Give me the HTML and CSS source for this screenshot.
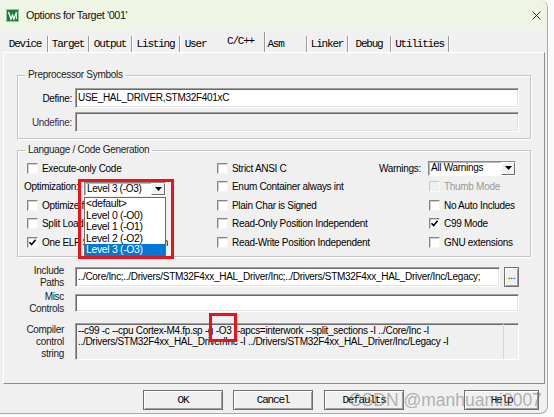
FILE: index.html
```html
<!DOCTYPE html>
<html>
<head>
<meta charset="utf-8">
<link rel="stylesheet" href="styles.css">
</head>
<body>
<div class="window">
  <div class="titlebar">
    <svg class="app-icon" width="13" height="13" viewBox="0 0 13 13">
      <rect x="0.5" y="0.5" width="12" height="12" fill="#1e7b3c" stroke="#8cc79a"/>
      <path d="M2.5 3 L5 10 L6.5 6 L8 10 L10.5 3" fill="none" stroke="#fff" stroke-width="1.3"/>
      <path d="M10.5 3 V10" stroke="#d8f0d8" stroke-width="1"/>
    </svg>
    <span class="title">Options for Target '001'</span>
    <svg class="close" width="9" height="9" viewBox="0 0 9 9">
      <path d="M0.5 0.5 L8.5 8.5 M8.5 0.5 L0.5 8.5" stroke="#2b2b2b" stroke-width="1"/>
    </svg>
  </div>

  <div class="tabs">
    <div class="tab">Device</div>
    <div class="tab">Target</div>
    <div class="tab">Output</div>
    <div class="tab">Listing</div>
    <div class="tab tab-user">User</div>
    <div class="tab tab-active">C/C++</div>
    <div class="tab tab-asm">Asm</div>
    <div class="tab">Linker</div>
    <div class="tab">Debug</div>
    <div class="tab">Utilities</div>
  </div>

  <div class="panel">
    <fieldset class="group group-pre">
      <legend>Preprocessor Symbols</legend>
      <div class="sym-grid">
        <span class="lbl">Define:</span>
        <div class="input">USE_HAL_DRIVER,STM32F401xC</div>
        <span class="lbl lbl-undef">Undefine:</span>
        <div class="input input-disabled"></div>
      </div>
    </fieldset>

    <fieldset class="group group-lang">
      <legend>Language / Code Generation</legend>
      <div class="lang-grid">
        <div class="cell"><span class="cb"></span>Execute-only Code</div>
        <div class="cell"><span class="cb"></span>Strict ANSI C</div>
        <div class="cell">
          <span class="warn-label">Warnings:</span>
          <div class="select select-warn">
            <span class="select-value">All Warnings</span>
            <span class="select-btn"><svg width="7" height="4" viewBox="0 0 7 4"><path d="M0 0 H7 L3.5 4 Z" fill="#000"/></svg></span>
          </div>
        </div>

        <div class="cell">
          <span class="opt-label">Optimization:</span>
          <div class="select select-opt">
            <span class="select-value">Level 3 (-O3)</span>
            <span class="select-btn"><svg width="7" height="4" viewBox="0 0 7 4"><path d="M0 0 H7 L3.5 4 Z" fill="#000"/></svg></span>
            <div class="dropdown">
              <div class="dd-item">&lt;default&gt;</div>
              <div class="dd-item">Level 0 (-O0)</div>
              <div class="dd-item">Level 1 (-O1)</div>
              <div class="dd-item">Level 2 (-O2)</div>
              <div class="dd-item dd-sel">Level 3 (-O3)</div>
            </div>
            <div class="redbox redbox-opt"></div>
          </div>
        </div>
        <div class="cell"><span class="cb"></span>Enum Container always int</div>
        <div class="cell cell-right cell-disabled"><span class="cb cb-disabled"></span>Thumb Mode</div>

        <div class="cell"><span class="cb"></span>Optimize for Time</div>
        <div class="cell"><span class="cb"></span>Plain Char is Signed</div>
        <div class="cell cell-right"><span class="cb"></span>No Auto Includes</div>

        <div class="cell"><span class="cb"></span>Split Load and Store Multiple</div>
        <div class="cell"><span class="cb"></span>Read-Only Position Independent</div>
        <div class="cell cell-right"><span class="cb"><svg width="9" height="9" viewBox="0 0 9 9"><path d="M1.5 4.2 L3.6 6.5 L7.6 1.8" fill="none" stroke="#000" stroke-width="1.6"/></svg></span>C99 Mode</div>

        <div class="cell"><span class="cb"><svg width="9" height="9" viewBox="0 0 9 9"><path d="M1.5 4.2 L3.6 6.5 L7.6 1.8" fill="none" stroke="#000" stroke-width="1.6"/></svg></span>One ELF Section per Function</div>
        <div class="cell"><span class="cb"></span>Read-Write Position Independent</div>
        <div class="cell cell-right"><span class="cb"></span>GNU extensions</div>
      </div>
    </fieldset>

    <div class="paths">
      <span class="plbl">Include<br>Paths</span>
      <div class="field-row">
        <div class="input input-inc">../Core/Inc;../Drivers/STM32F4xx_HAL_Driver/Inc;../Drivers/STM32F4xx_HAL_Driver/Inc/Legacy;</div>
        <div class="dots-btn">...</div>
      </div>
      <span class="plbl">Misc<br>Controls</span>
      <div class="input input-misc"></div>
      <span class="plbl plbl-top">Compiler<br>control<br>string</span>
      <div class="ctrl-string">
        <div class="ctrl-text">--c99 -c --cpu Cortex-M4.fp.sp -g <span class="o3">-O3<span class="redbox redbox-o3"></span></span> --apcs=interwork --split_sections -I ../Core/Inc -I<br>../Drivers/STM32F4xx_HAL_Driver/Inc -I ../Drivers/STM32F4xx_HAL_Driver/Inc/Legacy -I</div>
        <div class="vscroll"></div>
      </div>
    </div>
  </div>

  <div class="buttons">
    <div class="btn">OK</div>
    <div class="btn">Cancel</div>
    <div class="btn btn-defaults">Defaults</div>
    <div class="btn btn-help">Help</div>
  </div>

  <div class="watermark">CSDN @manhuami2007</div>
</div>
</body>
</html>
```

FILE: styles.css
```css
* { box-sizing: border-box; }

body {
  margin: 0;
  background: #fafafa;
  font-family: "Liberation Sans", Arial, sans-serif;
  font-size: 10px;
  letter-spacing: -0.3px;
  color: #000;
}

.window {
  position: relative;
  width: 548px;
  height: 414px;
  background: #f0f0f0;
  border-right: 1px solid #a9a9a9;
  border-bottom: 1px solid #a9a9a9;
  border-radius: 0 8px 8px 0;
  overflow: hidden;
}

/* title bar */
.titlebar {
  height: 30px;
  background: #eef5e4;
  display: flex;
  align-items: center;
  padding-left: 6px;
}
.app-icon { margin-right: 7px; }
.title {
  font-size: 10.8px;
  letter-spacing: -0.4px;
  color: #111;
}
.close {
  margin-left: auto;
  margin-right: 6px;
}

/* tabs */
.tabs {
  display: grid;
  grid-template-columns: 45px 41px 43px 48px 37px 48px 42px 41px 43px 58px;
  align-items: end;
  height: 22px;
  margin-left: 3px;
  font-family: "Liberation Mono", "Courier New", monospace;
  font-size: 11px;
  letter-spacing: -1.2px;
}
.tab {
  height: 16px;
  line-height: 16px;
  text-align: center;
  border-right: 1px solid #9a9a9a;
  box-shadow: 1px 0 0 #fff;
  white-space: nowrap;
}
.tab-user { border-right: none; box-shadow: none; padding-right: 6px; }
.tab-asm { padding-right: 20px; }
.tab-active {
  height: 20px;
  line-height: 19px;
}

/* panel */
.panel {
  margin-left: 3px;
  width: 542px;
  height: 332px;
  border-top: 1px solid #fff;
  border-left: 1px solid #fff;
  border-right: 1px solid #8e8e8e;
  border-bottom: 1px solid #8e8e8e;
  padding: 15px 13px 0 13px;
  display: flex;
  flex-direction: column;
}

.group {
  margin: 0;
  min-width: 0;
  border: 1px solid #c4c4c4;
  box-shadow: inset 1px 1px 0 #fff, 1px 1px 0 #fff;
}
.group legend {
  margin-left: -2px;
  padding: 0 3px;
  line-height: 14px;
  color: #1a1a1a;
}
.group-pre { padding: 6px 11px 6px 9px; }
.group-lang { margin-top: 4px; padding: 2px 11px 4px 9px; }

.sym-grid {
  display: grid;
  grid-template-columns: 45px 1fr;
  column-gap: 3px;
  row-gap: 4px;
  align-items: center;
}
.lbl { text-align: right; white-space: nowrap; }
.lbl-undef { color: #4a2650; }

.input {
  height: 20px;
  background: #fff;
  border-top: 1px solid #a0a0a0;
  border-left: 1px solid #a0a0a0;
  border-right: 1px solid #fff;
  border-bottom: 1px solid #fff;
  box-shadow: inset 1px 1px 0 #6a6a6a, inset -1px -1px 0 #e3e3e3;
  padding: 0 2px;
  line-height: 18px;
  white-space: nowrap;
  overflow: hidden;
}
.input-disabled { background: #f0f0f0; }

/* language grid */
.lang-grid {
  display: grid;
  grid-template-columns: 190px 162px 1fr;
  grid-auto-rows: 18.5px;
}
.cell {
  display: flex;
  align-items: center;
  gap: 4px;
  white-space: nowrap;
}
.cell-right { padding-left: 50px; }
.cell-disabled { color: #9a9a9a; }

.cb {
  width: 11px;
  height: 11px;
  flex: none;
  background: #fff;
  border: 1px solid;
  border-color: #868686 #f4f4f4 #f4f4f4 #868686;
  box-shadow: inset 1px 1px 0 #cfcfcf;
  display: flex;
  align-items: center;
  justify-content: center;
}
.cb-disabled {
  background: #f0f0f0;
  border-color: #c8c8c8 #fafafa #fafafa #c8c8c8;
  box-shadow: none;
}

.opt-label {
  width: 56px;
  margin-left: -3px;
  flex: none;
}
.warn-label { width: 45px; flex: none; }

.select {
  position: relative;
  display: flex;
  background: #fff;
  border: 1px solid;
  border-color: #8a8a8a #fff #fff #8a8a8a;
  box-shadow: inset 1px 1px 0 #b8b8b8;
  flex: none;
}
.select-opt { width: 82px; height: 14px; align-self: flex-end; }
.select-warn { width: 88px; height: 15px; }
.select-value {
  flex: 1;
  padding-left: 2px;
  line-height: 12px;
}
.select-btn {
  width: 14px;
  background: #f2f2f2;
  border: 1px solid;
  border-color: #fff #6d6d6d #6d6d6d #fff;
  display: flex;
  align-items: center;
  justify-content: center;
}

.dropdown {
  position: absolute;
  z-index: 2;
  left: -1px;
  top: 14px;
  width: 82px;
  background: #fff;
  border: 1px solid #6b6b6b;
}
.dd-item {
  height: 11.6px;
  line-height: 11.6px;
  padding-left: 1px;
  font-size: 10.4px;
  white-space: nowrap;
}
.dd-sel { background: #0078d7; color: #fff; }

.redbox {
  position: absolute;
  z-index: 3;
  border: 3px solid #e8131b;
  pointer-events: none;
}
.redbox-opt {
  left: -7px;
  top: -4px;
  width: 96px;
  height: 80px;
}

/* paths */
.paths {
  margin-top: 10px;
  margin-right: 12px;
  display: grid;
  grid-template-columns: 47px 1fr;
  grid-template-rows: 20px 18px 41px;
  column-gap: 11px;
  row-gap: 7px;
  align-items: center;
}
.plbl {
  text-align: right;
  line-height: 12px;
  color: #1a1a1a;
  white-space: nowrap;
}
.plbl-top { align-self: start; margin-top: 5px; }
.field-row {
  display: flex;
  gap: 4px;
}
.input-inc { flex: 1; }
.input-misc { height: 18px; }
.dots-btn {
  width: 15px;
  height: 20px;
  flex: none;
  background: #f0f0f0;
  border: 1px solid #707070;
  box-shadow: inset 1px 1px 0 #fff, inset -1px -1px 0 #a0a0a0;
  text-align: center;
  line-height: 16px;
  font-size: 10px;
}
.ctrl-string {
  align-self: end;
  height: 37px;
  display: flex;
  background: #f0f0f0;
  border-top: 1px solid #a0a0a0;
  border-left: 1px solid #a0a0a0;
  border-right: 1px solid #fff;
  border-bottom: 1px solid #fff;
  box-shadow: inset 1px 1px 0 #6a6a6a;
}
.ctrl-text {
  flex: 1;
  padding: 1px 2px;
  line-height: 11.5px;
  white-space: nowrap;
}
.o3 { position: relative; }
.redbox-o3 {
  left: -7px;
  right: -6px;
  top: -12px;
  bottom: -6px;
}
.vscroll {
  width: 15px;
  border-left: 1px solid #d6d6d6;
}

/* buttons */
.buttons {
  display: flex;
  gap: 10px;
  margin-top: 6px;
  padding-left: 143px;
  font-family: "Liberation Mono", "Courier New", monospace;
  font-size: 11px;
  letter-spacing: -1.2px;
}
.btn {
  width: 80px;
  height: 20px;
  line-height: 18px;
  text-align: center;
  background: #f0f0f0;
  border: 1px solid #6f6f6f;
  box-shadow: inset 1px 1px 0 #fff, inset -1px -1px 0 #a0a0a0;
}
.btn-defaults { margin-left: 1px; }
.btn-help { margin-left: 50px; width: 75px; }

.watermark {
  position: absolute;
  left: 349px;
  top: 388px;
  font-family: "Liberation Sans", Arial, sans-serif;
  font-size: 17.5px;
  letter-spacing: 0;
  line-height: 24px;
  color: rgba(120, 120, 120, 0.55);
  white-space: nowrap;
  pointer-events: none;
}
```
